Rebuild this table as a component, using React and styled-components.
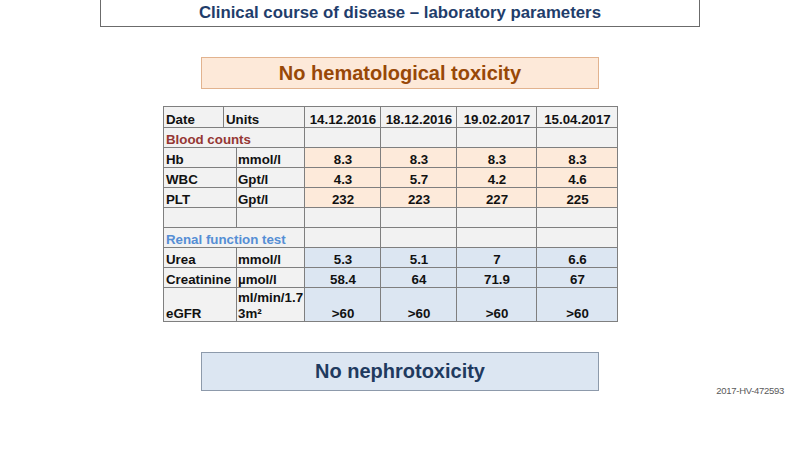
import React from 'react';
import styled, { createGlobalStyle } from 'styled-components';

const GlobalStyle = createGlobalStyle`
  html, body {
    margin: 0;
    padding: 0;
    background: #ffffff;
  }
  body {
    font-family: "Liberation Sans", Arial, sans-serif;
  }
`;

const blood = [
  { name: 'Hb', unit: 'mmol/l', values: ['8.3', '8.3', '8.3', '8.3'] },
  { name: 'WBC', unit: 'Gpt/l', values: ['4.3', '5.7', '4.2', '4.6'] },
  { name: 'PLT', unit: 'Gpt/l', values: ['232', '223', '227', '225'] }
];

const renal = [
  { name: 'Urea', unit: 'mmol/l', values: ['5.3', '5.1', '7', '6.6'] },
  { name: 'Creatinine', unit: 'µmol/l', values: ['58.4', '64', '71.9', '67'] },
  { name: 'eGFR', unit: <>ml/min/1.7<br />3m²</>, values: ['>60', '>60', '>60', '>60'], tall: true }
];

const dates = ['14.12.2016', '18.12.2016', '19.02.2017', '15.04.2017'];

const App = () => {
  return (
    <Page>
      <GlobalStyle />
      <TitleBar>Clinical course of disease – laboratory parameters</TitleBar>
      <Banner $tone="orange">No hematological toxicity</Banner>

      <TableWrap>
        <Table>
          <colgroup>
            <col style={{ width: 60 }} />
            <col style={{ width: 13 }} />
            <col style={{ width: 68 }} />
            <col style={{ width: 76 }} />
            <col style={{ width: 76 }} />
            <col style={{ width: 80 }} />
            <col style={{ width: 81 }} />
          </colgroup>
          <tbody>
            <Row $h={21}>
              <Cell>Date</Cell>
              <Cell colSpan={2}>Units</Cell>
              {dates.map((d) => (
                <Cell key={d} $center>{d}</Cell>
              ))}
            </Row>

            <Row>
              <Section colSpan={3} $color="#953734">Blood counts</Section>
              <Cell /><Cell /><Cell /><Cell />
            </Row>
            {blood.map((r) => (
              <Row key={r.name}>
                <Cell colSpan={2}>{r.name}</Cell>
                <Cell $unit>{r.unit}</Cell>
                {r.values.map((v, i) => (
                  <Value key={i} $fill="#fdeada">{v}</Value>
                ))}
              </Row>
            ))}

            <Row>
              <Cell colSpan={2} />
              <Cell /><Cell /><Cell /><Cell /><Cell />
            </Row>

            <Row>
              <Section colSpan={3} $color="#558ed5">Renal function test</Section>
              <Cell /><Cell /><Cell /><Cell />
            </Row>
            {renal.map((r) => (
              <Row key={r.name} $h={r.tall ? 34 : 20}>
                <Cell colSpan={2}>{r.name}</Cell>
                <Cell $unit>{r.unit}</Cell>
                {r.values.map((v, i) => (
                  <Value key={i} $fill="#dce6f2">{v}</Value>
                ))}
              </Row>
            ))}
          </tbody>
        </Table>
      </TableWrap>

      <BottomRow>
        <Banner $tone="blue">No nephrotoxicity</Banner>
        <RefCode>2017-HV-472593</RefCode>
      </BottomRow>
    </Page>
  );
};

export default App;

const Page = styled.div`
  width: 800px;
  height: 450px;
  overflow: hidden;
  display: flex;
  flex-direction: column;
  font-family: "Liberation Sans", Arial, sans-serif;
`;

const TitleBar = styled.div`
  box-sizing: border-box;
  margin: -1px 0 0 100px;
  width: 600px;
  height: 28px;
  border: 1px solid #6b6b6b;
  display: flex;
  align-items: center;
  justify-content: center;
  color: #1f3d6b;
  font-weight: bold;
  font-size: 16.8px;
`;

const Banner = styled.div`
  box-sizing: border-box;
  margin-left: 201px;
  width: 398px;
  display: flex;
  align-items: center;
  justify-content: center;
  font-weight: bold;
  font-size: 20px;
  ${({ $tone }) =>
    $tone === 'orange'
      ? `
    margin-top: 30px;
    height: 32px;
    background: #fde9d9;
    border: 1px solid #e2b38f;
    color: #984807;
  `
      : `
    height: 39px;
    background: #dce6f2;
    border: 1px solid #8d9aab;
    color: #1f3a5f;
  `}
`;

const TableWrap = styled.div`
  margin: 17px 0 0 163px;
`;

const Table = styled.table`
  border-collapse: collapse;
  table-layout: fixed;
  width: 454px;
  background: #f2f2f2;
  border: 1px solid #6f6f6f;
  font-size: 13.3px;
  font-weight: bold;
  color: #111111;
`;

const Row = styled.tr`
  height: ${({ $h }) => $h || 20}px;
`;

const Cell = styled.td`
  border: 1px solid #7f7f7f;
  padding: 0 1px 0 ${({ $unit }) => ($unit ? 1 : 2)}px;
  line-height: 15.5px;
  vertical-align: bottom;
  white-space: nowrap;
  overflow: hidden;
  text-align: ${({ $center }) => ($center ? 'center' : 'left')};
`;

const Section = styled(Cell)`
  color: ${({ $color }) => $color};
`;

const Value = styled(Cell)`
  background: ${({ $fill }) => $fill};
  text-align: center;
`;

const BottomRow = styled.div`
  margin-top: 30px;
  display: flex;
  align-items: flex-end;
`;

const RefCode = styled.div`
  margin: 0 16px -5px auto;
  font-size: 9.5px;
  color: #595959;
  letter-spacing: -0.3px;
`;
